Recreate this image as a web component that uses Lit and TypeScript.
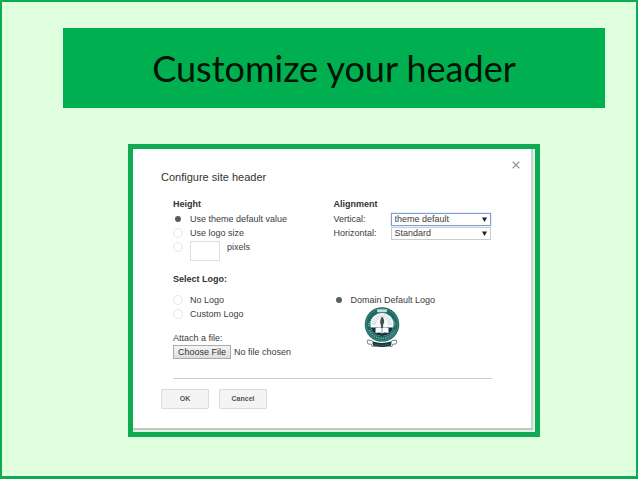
import { LitElement, html, css, svg } from "lit";
import { customElement, state } from "lit/decorators.js";

@customElement("school-emblem")
class SchoolEmblem extends LitElement {
  static styles = css`
    :host { display: block; width: 36px; height: 41px; }
    svg { display: block; width: 100%; height: 100%; }
  `;

  render() {
    const rays = Array.from({ length: 13 }, (_, i) => {
      const a = Math.PI + (i * Math.PI) / 12;
      return svg`<line x1=${18 + 6 * Math.cos(a)} y1=${17 + 6 * Math.sin(a)}
        x2=${18 + 10 * Math.cos(a)} y2=${17 + 10 * Math.sin(a)} stroke="#a9bcbd" stroke-width=".6"/>`;
    });
    return html`<svg viewBox="0 0 36 41" role="img" aria-label="School emblem">
      <circle cx="18" cy="17.5" r="17.3" fill="#1c6a63"/>
      <circle cx="18" cy="17.5" r="16" fill="none" stroke="#5d9c94" stroke-width=".6"/>
      <path d="M4.6 19A13.6 13.6 0 0 1 31.4 19" fill="none" stroke="#7fb3ab" stroke-width="1.6" stroke-dasharray="1.2 1"/>
      <path d="M5.2 23A14 14 0 0 0 30.8 23" fill="none" stroke="#74aba3" stroke-width="1.6" stroke-dasharray="1.3 1.1"/>
      <rect x="13" y="2.2" width="10" height="3" rx="1" fill="#c4ded9"/>
      <circle cx="18" cy="17.5" r="11.6" fill="#f6fafa"/>
      ${rays}
      <path d="M6.8 20.5H29.2A11.6 11.6 0 0 1 6.8 20.5Z" fill="#10313f"/>
      <path d="M11.5 21.2Q15.5 19.8 18 21.6Q20.5 19.8 24.5 21.2V26Q20.5 24.8 18 26.4Q15.5 24.8 11.5 26Z" fill="#fff"/>
      <path d="M18 21.6V26.4" stroke="#526a72" stroke-width=".7"/>
      <path d="M18 9.5C21 13 20.5 15.5 19.2 17.5L18.8 21H17.2L16.8 17.5C15.5 15.5 16 12.5 18 9.5Z" fill="#4c4b52"/>
      <path d="M8.5 33.8L3.8 33Q2.5 35.2 4 37L7.5 37.2L8 39.5L12 39M27.5 33.8L32.2 33Q33.5 35.2 32 37L28.5 37.2L28 39.5L24 39" fill="#fff" stroke="#51706f" stroke-width=".8"/>
      <path d="M8.3 34.2Q18 37.8 27.7 34.2L27 38.4Q18 41.6 9 38.4Z" fill="#123640"/>
      <path d="M10.5 37Q18 39.7 25.5 37" fill="none" stroke="#64848b" stroke-width="1" stroke-dasharray="1 .8"/>
    </svg>`;
  }
}

@customElement("header-dialog")
class HeaderDialog extends LitElement {
  @state() height = "theme";
  @state() logo = "domain";

  static styles = css`
    :host { display: block; }
    * { box-sizing: border-box; }
    .dialog {
      position: relative;
      padding: 21px 39px 19px 28px;
      background: #fff;
      border-right: 2px solid #cfd3cf;
      border-bottom: 2px solid #bccabf;
      color: #3c3c3c;
      font: 9px/14px "Liberation Sans", Arial, sans-serif;
    }
    .title { margin: 0 0 13px; font-size: 11px; font-weight: 400; line-height: 14px; color: #333; }
    .close {
      position: absolute; top: 11px; right: 10px;
      width: 10px; height: 10px; padding: 1px;
      border: 0; background: none;
    }
    .close svg { display: block; width: 8px; height: 8px; }
    .body { padding-left: 12px; }
    .columns { display: grid; grid-template-columns: 1fr 1fr; column-gap: 2px; }
    fieldset { min-width: 0; margin: 0; padding: 0; border: 0; }
    .heading { display: block; margin: 0; padding: 0; font-size: 9px; font-weight: 700; line-height: 15px; color: #333; }
    .option { display: flex; align-items: center; height: 14px; gap: 7px; }
    .option label { white-space: nowrap; }
    .pixels { align-items: flex-start; height: 21px; }
    .pixels input[type="radio"] { margin-top: 2px; }
    .size { width: 30px; height: 20px; margin: 1px 0 0; padding: 2px; border: 1px solid #ddd; font: inherit; background: #fff; }
    input[type="radio"] {
      appearance: none; flex: none; width: 10px; height: 10px; margin: 0;
      border: 1px solid #e6e6e6; border-radius: 50%; background: #fff;
    }
    input[type="radio"]:checked { border: 2px solid #fff; background: #5c5c5c; }
    .align-row { display: flex; align-items: center; height: 14px; }
    .align-row label { width: 57px; }
    .picker { position: relative; flex: 0 1 100px; }
    select {
      appearance: none; display: block; width: 100%; height: 13px; margin: 0; padding: 0 3px;
      border: 1px solid #ccc; border-radius: 0; background: #fff;
      color: #3c3c3c; font: inherit; line-height: 11px;
    }
    .focused { border-color: #7ba0d4; box-shadow: 0 0 1px #7ba0d4; }
    .arrow { position: absolute; top: 4px; right: 4px; width: 5px; height: 5px; pointer-events: none; }
    .logos { margin-top: 11px; }
    .choices { margin-top: 6px; }
    .emblem { margin-left: 30px; }
    .attach { display: block; margin-top: 10px; }
    .left-logo { height: 66px; }
    .file { display: block; width: 100%; height: 14px; margin: 0; color: #3c3c3c; font: inherit; }
    .file::file-selector-button {
      box-sizing: border-box; width: 58px; height: 14px; margin: 0 3px 0 0; padding: 0;
      border: 1px solid #aaa; border-radius: 0;
      background: linear-gradient(#f5f5f5, #dedede); color: #333; font: inherit; line-height: 12px;
    }
    .rule { height: 1px; margin: 19px 0 10px 12px; border: 0; background: #ccc; }
    .actions { display: flex; gap: 10px; }
    .action {
      width: 48px; height: 20px; padding: 0; border: 1px solid #dcdcdc; border-radius: 1px;
      background: #f4f4f4; color: #555; font: bold 7px/18px "Liberation Sans", Arial, sans-serif;
    }
  `;

  private radio(group: "height" | "logo", value: string, id: string) {
    return html`<input type="radio" id=${id} name=${group} .checked=${this[group] === value}
      @change=${() => { this[group] = value; }} />`;
  }

  private picker(id: string, options: string[], focused: boolean) {
    return html`<div class="picker">
      <select id=${id} class=${focused ? "focused" : ""}>
        ${options.map((o) => html`<option>${o}</option>`)}
      </select>
      <svg class="arrow" viewBox="0 0 5 5" aria-hidden="true"><path d="M0 .5H5L2.5 5Z" fill="#222"/></svg>
    </div>`;
  }

  render() {
    return html`<form class="dialog" @submit=${(e: Event) => e.preventDefault()}>
      <button class="close" type="button" aria-label="Close">
        <svg viewBox="0 0 8 8"><path d="M.7 .7L7.3 7.3M7.3 .7L.7 7.3" stroke="#999" stroke-width="1.3"/></svg>
      </button>
      <h2 class="title">Configure site header</h2>
      <div class="body">
        <div class="columns">
          <fieldset>
            <legend class="heading">Height</legend>
            <div class="option">${this.radio("height", "theme", "h-theme")}<label for="h-theme">Use theme default value</label></div>
            <div class="option">${this.radio("height", "logo", "h-logo")}<label for="h-logo">Use logo size</label></div>
            <div class="option pixels">${this.radio("height", "pixels", "h-pixels")}
              <input class="size" type="text" aria-label="Height in pixels" />
              <label for="h-pixels">pixels</label></div>
          </fieldset>
          <fieldset>
            <legend class="heading">Alignment</legend>
            <div class="align-row"><label for="vertical">Vertical:</label>${this.picker("vertical", ["theme default", "Top", "Bottom"], true)}</div>
            <div class="align-row"><label for="horizontal">Horizontal:</label>${this.picker("horizontal", ["Standard", "Left", "Right"], false)}</div>
          </fieldset>
        </div>
        <fieldset class="logos">
          <legend class="heading">Select Logo:</legend>
          <div class="columns choices">
            <div class="left-logo">
              <div class="option">${this.radio("logo", "none", "l-none")}<label for="l-none">No Logo</label></div>
              <div class="option">${this.radio("logo", "custom", "l-custom")}<label for="l-custom">Custom Logo</label></div>
              <label class="attach" for="file">Attach a file:</label>
              <input class="file" id="file" type="file" />
            </div>
            <div>
              <div class="option">${this.radio("logo", "domain", "l-domain")}<label for="l-domain">Domain Default Logo</label></div>
              <school-emblem class="emblem"></school-emblem>
            </div>
          </div>
        </fieldset>
      </div>
      <hr class="rule" />
      <div class="actions">
        <button class="action" type="submit">OK</button>
        <button class="action" type="button">Cancel</button>
      </div>
    </form>`;
  }
}

@customElement("app-root")
class AppRoot extends LitElement {
  static styles = css`
    :host { display: block; }
    .slide {
      box-sizing: border-box; min-height: 100vh; padding: 26px 31px 39px 61px;
      border: 2px solid #0fab53; border-bottom-width: 3px; background: #dfffdf;
    }
    .banner {
      margin: 0; padding: 16px 0; background: #00b050; color: #031203; text-align: center;
      font: 400 36px/48px Lato, "Open Sans", sans-serif;
    }
    .frame { margin: 36px 65px 0; padding: 0 2px 2px 0; border: 5px solid #0fab53; background: #dff3e4; }
  `;

  render() {
    return html`<main class="slide">
      <h1 class="banner">Customize your header</h1>
      <div class="frame"><header-dialog></header-dialog></div>
    </main>`;
  }
}
